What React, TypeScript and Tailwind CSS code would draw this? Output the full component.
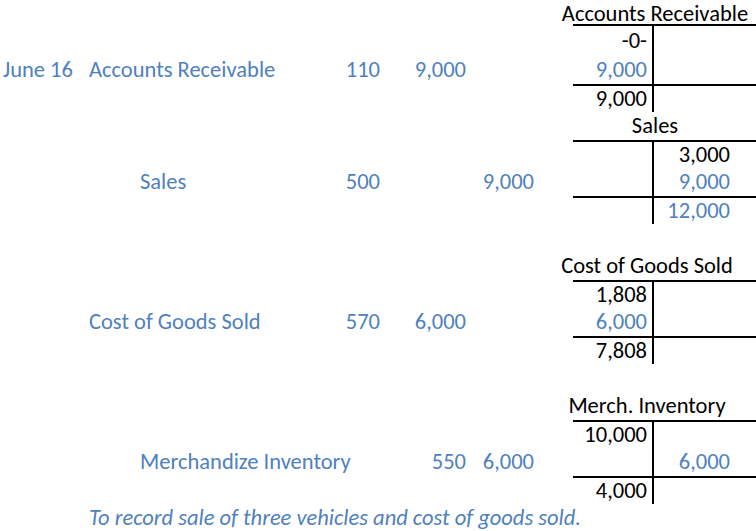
import React from "react";

const BLUE = "text-[#4f81bd]";
const BLACK = "text-black";

type Cell = { t?: string; blue?: boolean };
type TRow = { l?: Cell; r?: Cell; h: string };

function TBody({
  place,
  rows,
  totalIdx,
}: {
  place: string;
  rows: TRow[];
  totalIdx: number;
}) {
  return (
    <div className={`${place} col-start-8 col-span-2 flex flex-col border-t-2 border-black`}>
      {rows.map((row, i) => (
        <div
          key={i}
          className={`grid grid-cols-[81px_102px] ${row.h} ${i === totalIdx ? "border-t-2 border-black" : ""}`}
        >
          <div
            className={`flex items-center justify-end pr-[5px] border-r-2 border-black ${row.l?.blue ? BLUE : BLACK}`}
          >
            {row.l?.t}
          </div>
          <div
            className={`flex items-center justify-end pr-[26px] ${row.r?.blue ? BLUE : BLACK}`}
          >
            {row.r?.t}
          </div>
        </div>
      ))}
    </div>
  );
}

export default function App() {
  return (
    <div className="w-[756px] h-[531px] bg-white overflow-hidden font-[family-name:Carlito,Lato,sans-serif] text-[22.5px] leading-[26px] whitespace-nowrap">
      <div className="grid grid-cols-[86px_51px_163px_84px_86px_68px_35px_81px_102px] grid-rows-[24px_32px_repeat(17,28px)]">
        {/* Journal entries */}
        <div className={`row-start-3 col-start-1 flex items-center pl-[3px] ${BLUE}`}>June 16</div>
        <div className={`row-start-3 col-start-2 col-span-2 flex items-center pl-[3px] ${BLUE}`}>Accounts Receivable</div>
        <div className={`row-start-3 col-start-4 flex items-center justify-end pr-[4px] ${BLUE}`}>110</div>
        <div className={`row-start-3 col-start-5 flex items-center justify-end pr-[4px] ${BLUE}`}>9,000</div>

        <div className={`row-start-7 col-start-3 flex items-center pl-[3px] ${BLUE}`}>Sales</div>
        <div className={`row-start-7 col-start-4 flex items-center justify-end pr-[4px] ${BLUE}`}>500</div>
        <div className={`row-start-7 col-start-6 flex items-center justify-end pr-[4px] ${BLUE}`}>9,000</div>

        <div className={`row-start-12 col-start-2 col-span-2 flex items-center pl-[3px] ${BLUE}`}>Cost of Goods Sold</div>
        <div className={`row-start-12 col-start-4 flex items-center justify-end pr-[4px] ${BLUE}`}>570</div>
        <div className={`row-start-12 col-start-5 flex items-center justify-end pr-[4px] ${BLUE}`}>6,000</div>

        <div className={`row-start-17 col-start-3 col-span-2 flex items-center pl-[3px] ${BLUE}`}>Merchandize Inventory</div>
        <div className={`row-start-17 col-start-5 flex items-center justify-end pr-[4px] ${BLUE}`}>550</div>
        <div className={`row-start-17 col-start-6 flex items-center justify-end pr-[4px] ${BLUE}`}>6,000</div>

        <div className={`row-start-19 col-start-2 col-span-8 flex items-center pl-[3px] italic ${BLUE}`}>
          To record sale of three vehicles and cost of goods sold.
        </div>

        {/* T-account: Accounts Receivable */}
        <div className="row-start-1 col-start-7 col-span-3 self-start h-[27px] flex justify-center pl-[16px] leading-[27px] text-black">
          Accounts Receivable
        </div>
        <TBody
          place="row-start-2 row-span-3"
          totalIdx={2}
          rows={[
            { h: "h-[30px]", l: { t: "-0-" } },
            { h: "h-[28px]", l: { t: "9,000", blue: true } },
            { h: "h-[26px]", l: { t: "9,000" } },
          ]}
        />

        {/* T-account: Sales */}
        <div className="row-start-5 col-start-7 col-span-3 flex items-center justify-center pl-[16px] text-black">
          Sales
        </div>
        <TBody
          place="row-start-6 row-span-3"
          totalIdx={2}
          rows={[
            { h: "h-[26px]", r: { t: "3,000" } },
            { h: "h-[28px]", r: { t: "9,000", blue: true } },
            { h: "h-[26px]", r: { t: "12,000", blue: true } },
          ]}
        />

        {/* T-account: Cost of Goods Sold */}
        <div className="row-start-10 col-start-7 col-span-3 flex items-center justify-center text-black">
          Cost of Goods Sold
        </div>
        <TBody
          place="row-start-11 row-span-3"
          totalIdx={2}
          rows={[
            { h: "h-[26px]", l: { t: "1,808" } },
            { h: "h-[28px]", l: { t: "6,000", blue: true } },
            { h: "h-[26px]", l: { t: "7,808" } },
          ]}
        />

        {/* T-account: Merch. Inventory */}
        <div className="row-start-15 col-start-7 col-span-3 flex items-center justify-center text-black">
          Merch. Inventory
        </div>
        <TBody
          place="row-start-16 row-span-3"
          totalIdx={2}
          rows={[
            { h: "h-[26px]", l: { t: "10,000" } },
            { h: "h-[28px]", r: { t: "6,000", blue: true } },
            { h: "h-[26px]", l: { t: "4,000" } },
          ]}
        />
      </div>
    </div>
  );
}
